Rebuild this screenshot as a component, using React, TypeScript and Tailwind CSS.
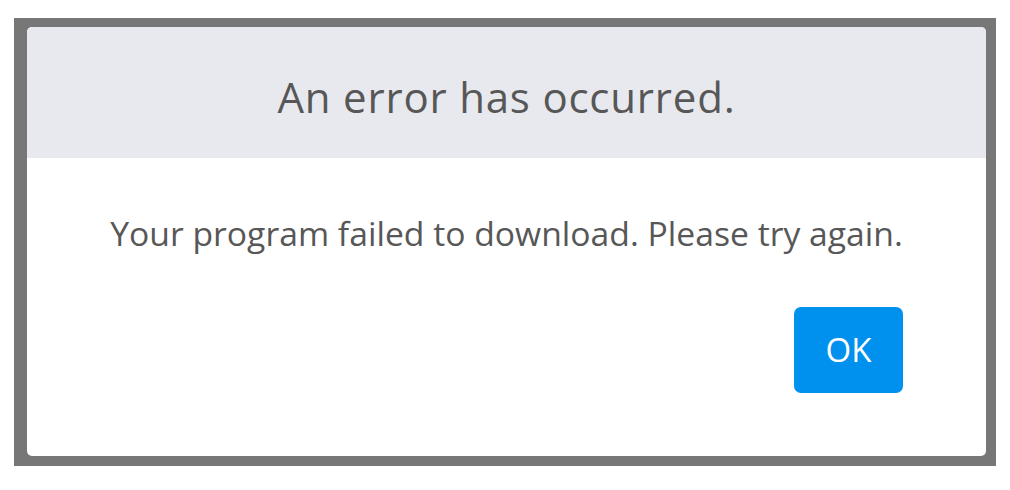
import React from "react";

const App = () => {
  return (
    <div className="w-[1010px] h-[490px] bg-white pt-[18px] pl-[14px] font-['Open_Sans',sans-serif]">
      <div className="w-[982px] h-[448px] bg-[#777777] pt-[9px] pl-[13px]">
        <div className="w-[959px] h-[429px] bg-white rounded-[5px] overflow-hidden flex flex-col">
          <div className="h-[131px] bg-[#e8e9ee] flex items-center justify-center pt-[7px]">
            <h2 className="text-[42px] tracking-[0.8px] text-[#575757]">An error has occurred.</h2>
          </div>
          <p className="mt-[55px] text-center text-[33.7px] text-[#575757] leading-[40px]">
            Your program failed to download. Please try again.
          </p>
          <div className="flex justify-end mt-[54px] pr-[83px]">
            <button className="w-[109px] h-[86px] bg-[#0091ef] rounded-[7px] text-white text-[33px]">
              OK
            </button>
          </div>
        </div>
      </div>
    </div>
  );
};

export default App;
